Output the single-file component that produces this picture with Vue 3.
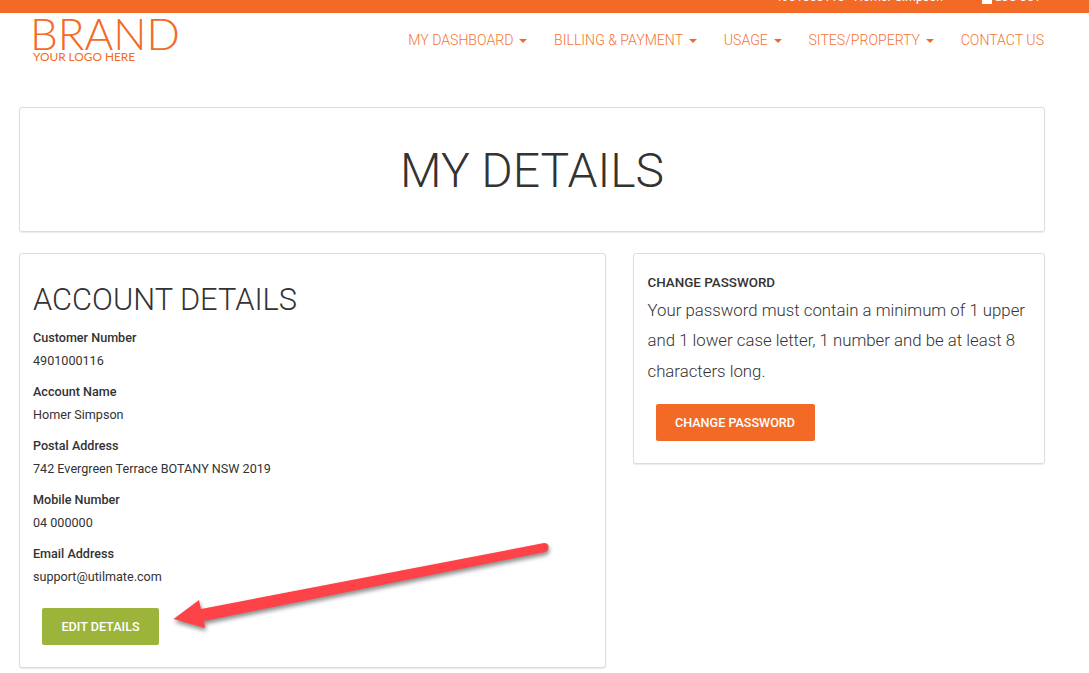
<script setup>
const fields = [
  { label: 'Customer Number', value: '4901000116' },
  { label: 'Account Name', value: 'Homer Simpson' },
  { label: 'Postal Address', value: '742 Evergreen Terrace BOTANY NSW 2019' },
  { label: 'Mobile Number', value: '04 000000' },
  { label: 'Email Address', value: 'support@utilmate.com' },
]
const menu = [
  { name: 'MY DASHBOARD', caret: true },
  { name: 'BILLING & PAYMENT', caret: true },
  { name: 'USAGE', caret: true },
  { name: 'SITES/PROPERTY', caret: true },
  { name: 'CONTACT US', caret: false },
]
</script>

<template>
  <div class="page">
    <div class="topbar">
      <span class="who">4901000116 - Homer Simpson</span>
      <span class="logout"><i class="lock"></i>LOG OUT</span>
    </div>

    <header class="navbar">
      <div class="logo">
        <span class="brand">BRAND</span>
        <span class="tag">YOUR LOGO HERE</span>
      </div>
      <nav class="menu">
        <a v-for="item in menu" :key="item.name">
          {{ item.name }}<i v-if="item.caret" class="caret"></i>
        </a>
      </nav>
    </header>

    <main class="content">
      <section class="panel title-panel">
        <h1>MY DETAILS</h1>
      </section>

      <div class="columns">
        <section class="panel account">
          <h2>ACCOUNT DETAILS</h2>
          <div v-for="f in fields" :key="f.label" class="field">
            <div class="label">{{ f.label }}</div>
            <div class="value">{{ f.value }}</div>
          </div>
          <button class="btn green">EDIT DETAILS</button>
        </section>

        <section class="panel password">
          <div class="pw-title">CHANGE PASSWORD</div>
          <p>Your password must contain a minimum of 1 upper and 1 lower case letter, 1 number and be at least 8 characters long.</p>
          <button class="btn orange">CHANGE PASSWORD</button>
        </section>
      </div>
    </main>

    <svg class="arrow" width="1089" height="673" viewBox="0 0 1089 673">
      <path d="M201 609 L544 543 Q548.5 543 548.5 547 Q548.5 551 545 552 L204 621 L205 628 L173.5 619 L199 600 Z" fill="#fe4348" />
    </svg>
  </div>
</template>

<style>
html, body {
  margin: 0;
  background: #fff;
}
</style>

<style scoped>
.page {
  position: relative;
  width: 1089px;
  height: 673px;
  overflow: hidden;
  background: #fff;
  font-family: Roboto, "Liberation Sans", sans-serif;
  color: #333;
}

.topbar {
  height: 13px;
  background: #f36a26;
  color: #fff;
  display: flex;
  justify-content: flex-end;
  align-items: flex-start;
  gap: 39px;
  padding-right: 48px;
  overflow: hidden;
  font-size: 12.4px;
  line-height: 13px;
}
.who, .logout {
  margin-top: -10px;
}
.logout {
  display: flex;
  align-items: flex-end;
  gap: 3px;
  font-size: 11.3px;
}
.lock {
  display: block;
  width: 10px;
  height: 14px;
  background: #fff;
}

.navbar {
  display: flex;
  justify-content: space-between;
  align-items: flex-start;
  padding: 0 45px 0 33px;
  height: 94px;
}
.logo {
  display: flex;
  flex-direction: column;
  width: 146px;
}
.brand {
  font-family: Lato, Roboto, sans-serif;
  font-weight: 300;
  font-size: 44px;
  line-height: 37px;
  padding-top: 2px;
  margin-left: -3px;
  color: #f36a26;
  white-space: nowrap;
}
.tag {
  font-family: Lato, Roboto, sans-serif;
  font-size: 11.85px;
  line-height: 10px;
  color: #f36a26;
  white-space: nowrap;
}
.menu {
  display: flex;
  gap: 26.7px;
  padding-top: 19px;
  font-size: 14.1px;
  line-height: 17px;
  font-weight: 300;
  color: #f47436;
}
.menu a {
  white-space: nowrap;
}
.caret {
  display: inline-block;
  margin-left: 6px;
  vertical-align: middle;
  border-top: 4px solid #f36a26;
  border-left: 4px solid transparent;
  border-right: 4px solid transparent;
}

.content {
  padding: 0 44px 0 19px;
}
.panel {
  box-sizing: border-box;
  background: #fff;
  border: 1px solid #ddd;
  border-radius: 3px;
  box-shadow: 0 1px 1px rgba(0, 0, 0, 0.08);
}
.title-panel {
  height: 125px;
  padding-top: 2px;
  display: flex;
  align-items: center;
  justify-content: center;
}
h1 {
  margin: 0;
  font-size: 48px;
  font-weight: 300;
  line-height: 50px;
  color: #333;
}
.columns {
  display: flex;
  align-items: flex-start;
  gap: 27px;
  margin-top: 21px;
}
.account {
  width: 587px;
  height: 415px;
  padding: 29px 13px 0;
}
h2 {
  margin: 0 0 12px;
  font-size: 30.8px;
  font-weight: 300;
  line-height: 34px;
  color: #333;
}
.field {
  font-size: 12.6px;
  line-height: 18px;
  margin-bottom: 13px;
}
.label {
  font-weight: 500;
  margin-bottom: 5px;
}
.value {
  font-weight: 400;
}
.btn {
  display: block;
  height: 37px;
  border: 0;
  border-radius: 2px;
  color: #fff;
  font-family: inherit;
  font-size: 12.6px;
  font-weight: 500;
  padding: 0;
}
.green {
  width: 117px;
  margin: 22px 0 0 9px;
  background: #9cb43a;
}
.orange {
  width: 159px;
  margin: 18.4px 0 0 8px;
  padding-bottom: 1px;
  background: #f36a26;
}
.password {
  width: 412px;
  height: 211px;
  padding: 20px 14px 0 13.5px;
}
.pw-title {
  font-size: 13.4px;
  font-weight: 500;
  line-height: 17px;
}
.password p {
  margin: 4px 0 0;
  font-size: 16.8px;
  font-weight: 300;
  line-height: 30.3px;
  color: #333;
}

.arrow {
  position: absolute;
  left: 0;
  top: 0;
  pointer-events: none;
  filter: drop-shadow(1px 3px 2px rgba(0, 0, 0, 0.45));
}
</style>
